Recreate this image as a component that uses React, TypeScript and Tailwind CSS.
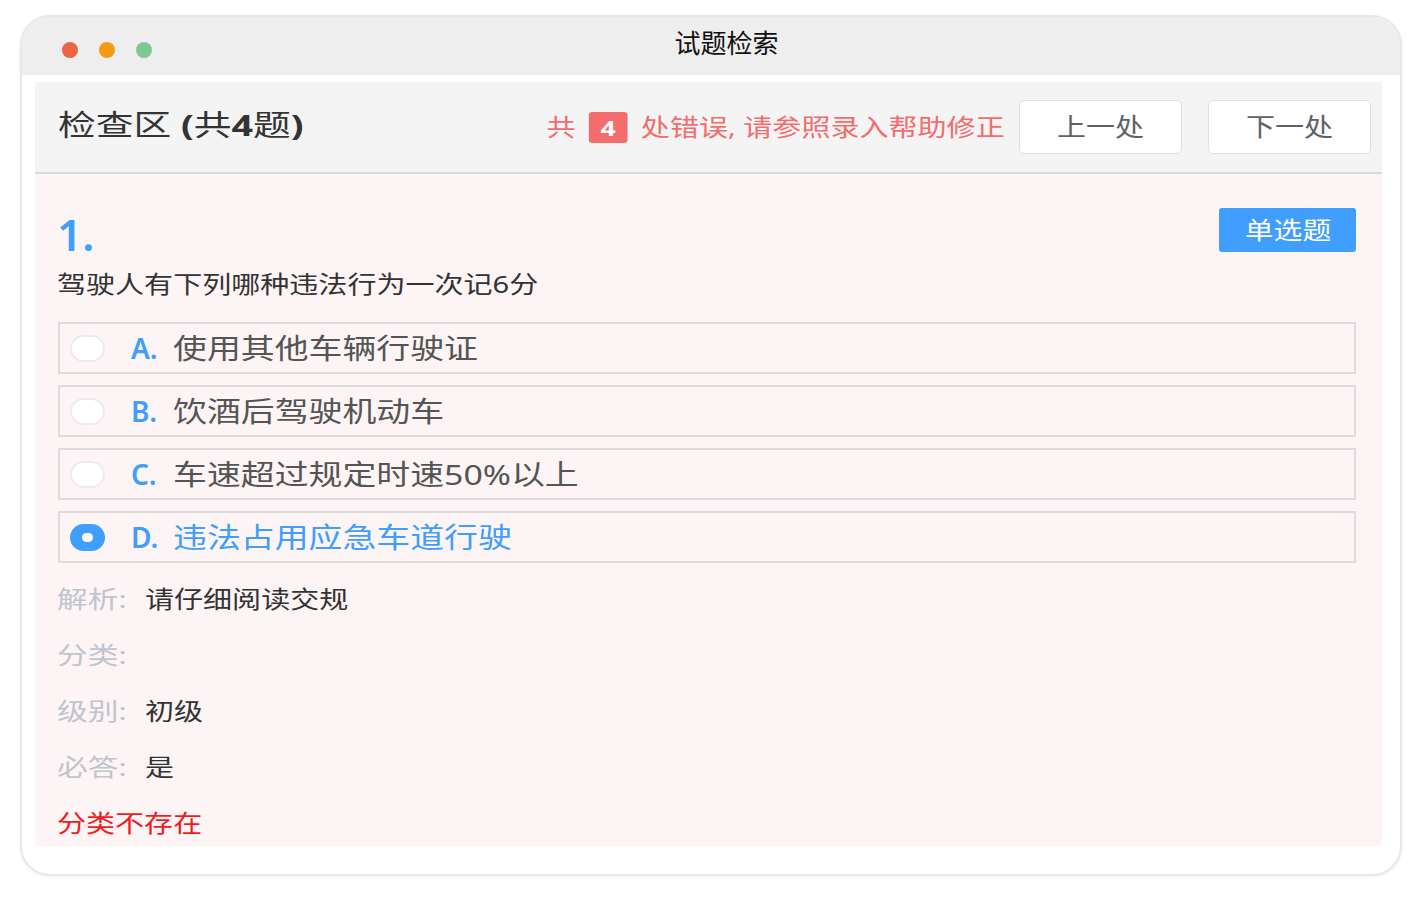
import React from "react";

const font = { fontFamily: '"Noto Sans", "Noto Sans CJK SC", sans-serif' };

type Option = { key: string; text: string; checked?: boolean };

const options: Option[] = [
  { key: "A.", text: "使用其他车辆行驶证" },
  { key: "B.", text: "饮酒后驾驶机动车" },
  { key: "C.", text: "车速超过规定时速50%以上" },
  { key: "D.", text: "违法占用应急车道行驶", checked: true },
];

const details = [
  { label: "解析:", value: "请仔细阅读交规" },
  { label: "分类:", value: "" },
  { label: "级别:", value: "初级" },
  { label: "必答:", value: "是" },
];

function Radio({ checked }: { checked?: boolean }) {
  if (checked) {
    return (
      <span className="flex h-[27px] w-[35px] shrink-0 items-center justify-center rounded-full bg-[#409eff]">
        <span className="h-[9px] w-[11px] rounded-full bg-white" />
      </span>
    );
  }
  return <span className="h-[27px] w-[35px] shrink-0 rounded-full border-2 border-[#ececec] bg-white" />;
}

export default function App() {
  return (
    <div className="min-h-[900px] bg-white pl-[20px] pt-[15px]" style={font}>
      {/* window */}
      <div className="flex h-[861px] w-[1382px] flex-col overflow-hidden rounded-[30px] border-2 border-[#e8e8e8] bg-white shadow-[0_1px_4px_rgba(0,0,0,0.06)]">
        {/* title bar */}
        <div className="flex h-[58px] shrink-0 items-start bg-[#eeeeee]">
          <div className="flex gap-[21px] pl-[40px] pt-[25px]">
            <span className="h-[16px] w-[16px] rounded-full bg-[#ec6441]" />
            <span className="h-[16px] w-[16px] rounded-full bg-[#f39c12]" />
            <span className="h-[16px] w-[16px] rounded-full bg-[#7fc98f]" />
          </div>
          <div className="flex flex-1 justify-center pr-[99px] pt-[8px] text-[26px] leading-[36px] text-[#111]">
            试题检索
          </div>
        </div>

        {/* content */}
        <div className="flex-1 pl-[13px] pr-[18px] pt-[7px]">
          <div className="flex h-[764px] flex-col overflow-hidden">
            {/* header */}
            <div className="flex h-[92px] shrink-0 items-center justify-between border-b-2 border-[#d9d9d9] bg-[#f4f4f5] pl-[23px] pr-[11px]">
              <div className="-mt-[4px] inline-block origin-left scale-x-[1.3] text-[29px] text-[#333]">
                检查区 <span className="font-bold">(</span>共<span className="font-bold">4</span>题<span className="font-bold">)</span>
              </div>
              <div className="flex items-center">
                <div className="flex origin-right scale-x-[1.21] items-center text-[24px] text-[#f56c6c]">
                  <span>共</span>
                  <span className="ml-[11px] flex h-[31px] w-[32px] items-center justify-center rounded-[3px] bg-[#f56c6c] text-[22px] font-bold text-white">
                    4
                  </span>
                  <span className="ml-[11px]">处错误, 请参照录入帮助修正</span>
                </div>
                <button className="ml-[14px] flex h-[54px] w-[163px] items-center justify-center rounded-[5px] border border-[#dcdfe6] bg-white text-[25px] text-[#606266]">
                  <span className="inline-block scale-x-[1.16]">上一处</span>
                </button>
                <button className="ml-[26px] flex h-[54px] w-[163px] items-center justify-center rounded-[5px] border border-[#dcdfe6] bg-white text-[25px] text-[#606266]">
                  <span className="inline-block scale-x-[1.16]">下一处</span>
                </button>
              </div>
            </div>

            {/* body */}
            <div className="flex-1 bg-[#fdf5f5] pl-[22px] pr-[26px] pt-[34px]">
              <div className="flex items-start justify-between">
                <div className="text-[44px] font-semibold leading-[53px] text-[#409eff]">1.</div>
                <button className="flex h-[44px] w-[137px] items-center justify-center rounded-[3px] bg-[#409eff] text-[24px] text-white">
                  <span className="inline-block scale-x-[1.2]">单选题</span>
                </button>
              </div>
              <div className="mt-[5px] text-[24px] leading-[36px] text-[#333]">
                <span className="inline-block origin-left scale-x-[1.21]">驾驶人有下列哪种违法行为一次记6分</span>
              </div>

              <div className="mt-[20px] flex flex-col gap-[11px] pl-[1px]">
                {options.map((o) => (
                  <div
                    key={o.key}
                    className="flex h-[52px] items-center border-2 border-[#dcdcdc] pl-[10px]"
                  >
                    <Radio checked={o.checked} />
                    <span className="ml-[26px] w-[42px] text-[28px] font-semibold text-[#409eff]">{o.key}</span>
                    <span
                      className={`inline-block origin-left scale-x-[1.21] text-[28px] ${o.checked ? "text-[#409eff]" : "text-[#555]"}`}
                    >
                      {o.text}
                    </span>
                  </div>
                ))}
              </div>

              <div className="mt-[8px] flex flex-col">
                {details.map((d) => (
                  <div key={d.label} className="flex h-[56px] items-center text-[24px]">
                    <span className="w-[88px]">
                      <span className="inline-block origin-left scale-x-[1.28] text-[#c0c4cc]">{d.label}</span>
                    </span>
                    <span className="inline-block origin-left scale-x-[1.21] text-[#333]">{d.value}</span>
                  </div>
                ))}
                <div className="flex h-[56px] items-center text-[24px] text-[#f21b1b]">
                  <span className="inline-block origin-left scale-x-[1.21]">分类不存在</span>
                </div>
              </div>
            </div>
          </div>
        </div>
      </div>
    </div>
  );
}
